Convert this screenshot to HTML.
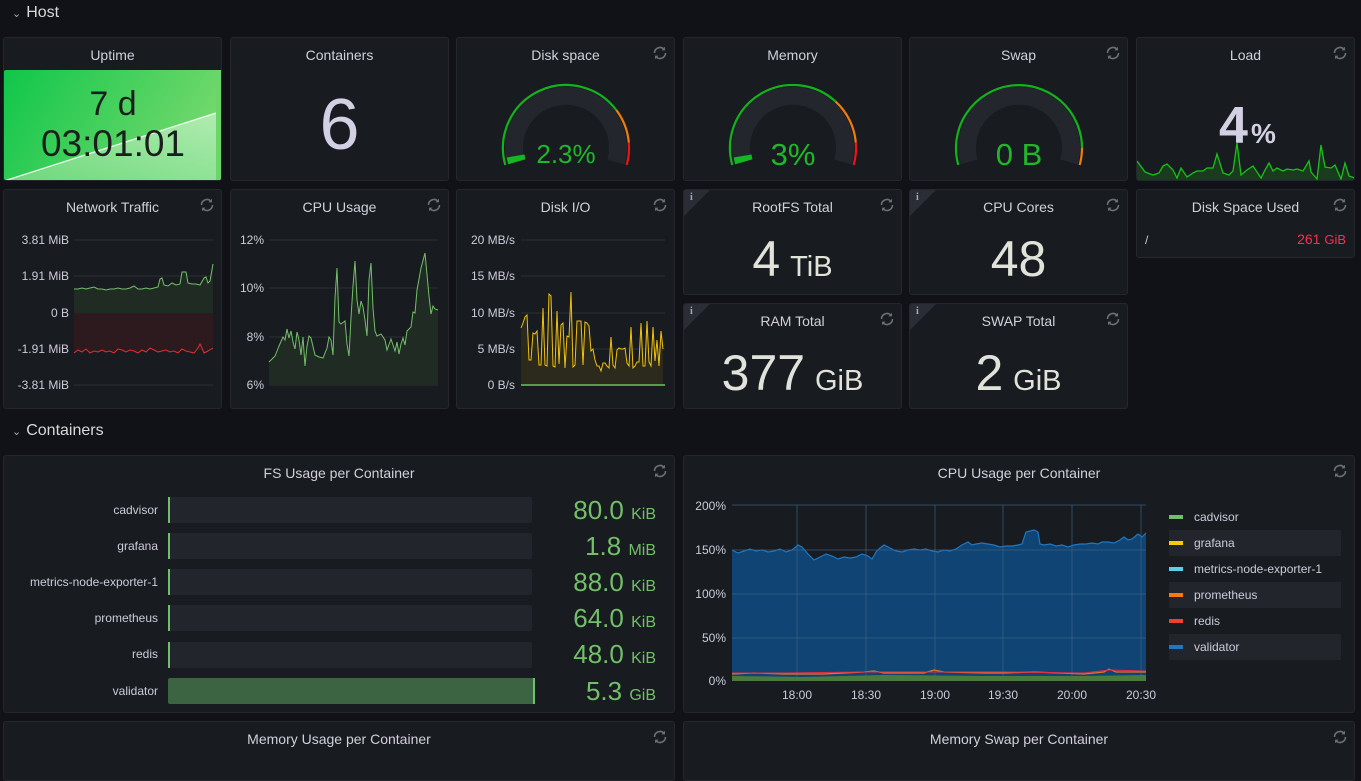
<!DOCTYPE html>
<html><head><meta charset="utf-8"><style>
*{margin:0;padding:0;box-sizing:border-box}
body{width:1361px;height:762px;background:#111217;font-family:"Liberation Sans",sans-serif;color:#ccccdc;overflow:hidden;position:relative}
.p{position:absolute;background:#181b1f;border:1px solid #24272d;border-radius:3px;overflow:hidden}
.t{position:absolute;left:0;right:0;top:9px;text-align:center;font-size:14px;color:#d0d1dc}
.r{position:absolute;right:6px;top:7px;width:16px;height:16px}
.sec{position:absolute;left:12px;font-size:16px;color:#d8d9da}
.sec b{font-weight:normal;font-size:11px;margin-right:5px;color:#aaa}
.info{position:absolute;left:0;top:0;width:0;height:0;border-top:26px solid #2a2d35;border-right:26px solid transparent}
.info i{position:absolute;left:6px;top:-24px;font-size:10px;font-style:normal;font-weight:bold;color:#aaa;font-family:"Liberation Serif",serif}
.big{position:absolute;left:0;right:0;text-align:center;color:#e0e3da;font-size:50px;white-space:nowrap}
.big span{font-size:29px;margin-left:-4px}
svg text{font-family:"Liberation Sans",sans-serif}
</style></head><body>
<svg width="0" height="0" style="position:absolute"><defs><g id="ref"><path d="M2.5 8a5.5 5.5 0 0 1 9.6-3.6" fill="none" stroke="#6c6f78" stroke-width="1.6"/><path d="M13 1.8v3.6H9.4z" fill="#6c6f78"/><path d="M13.5 8a5.5 5.5 0 0 1-9.6 3.6" fill="none" stroke="#6c6f78" stroke-width="1.6"/><path d="M3 14.2v-3.6h3.6z" fill="#6c6f78"/></g></defs></svg>

<div class="sec" style="top:4px"><b>⌄</b>Host</div>

<div class="p" style="left:3px;top:37px;width:219px;height:144px">
<div class="t">Uptime</div>
<svg style="position:absolute;left:0;top:32px" width="219" height="112">
<defs><linearGradient id="ug" x1="0" y1="0" x2="1" y2="0.3"><stop offset="0" stop-color="#0fc64a"/><stop offset="1" stop-color="#72d86c"/></linearGradient>
<linearGradient id="ul" x1="0" y1="1" x2="1" y2="0"><stop offset="0" stop-color="#6cd87a"/><stop offset="1" stop-color="#b0ecb0"/></linearGradient></defs>
<rect x="0" y="0" width="218" height="111" rx="2" fill="url(#ug)"/>
<path d="M0 111 L212 43 L212 111 Z" fill="url(#ul)"/>
<path d="M0 111 L212 43" stroke="#f2fff2" stroke-width="1.2"/>
<rect x="212" y="0" width="6" height="111" fill="#6bd56a"/>
<text x="109" y="45" text-anchor="middle" font-size="34" fill="#1c1e1d">7 d</text>
<text x="109" y="86" text-anchor="middle" font-size="37" fill="#1c1e1d">03:01:01</text>
</svg></div>

<div class="p" style="left:230px;top:37px;width:219px;height:144px">
<div class="t">Containers</div>
<div style="position:absolute;left:0;right:0;top:46px;text-align:center;font-size:72px;color:#d2d0e3">6</div>
</div>

<div class="p" style="left:456px;top:37px;width:219px;height:144px">
<div class="t">Disk space</div><svg class="r"><use href="#ref"/></svg>
<svg style="position:absolute;left:0;top:0" width="219" height="144" fill="none">
<path d="M59 124 A52 52 0 1 1 159 124" stroke="#23262d" stroke-width="18"/>
<path d="M59.9 123.7 A51 51 0 0 1 58.6 118" stroke="#15b824" stroke-width="18"/>
<path d="M48.3 127 A63 63 0 0 1 159.3 72.1" stroke="#13b31c" stroke-width="2.2"/>
<path d="M159.3 72.1 A63 63 0 0 1 171.8 104.5" stroke="#f07c0a" stroke-width="2.2"/>
<path d="M171.8 104.5 A63 63 0 0 1 169.7 127" stroke="#f21313" stroke-width="2.2"/>
<text x="109" y="125" text-anchor="middle" font-size="26" fill="#1fb82a">2.3%</text>
</svg></div>

<div class="p" style="left:683px;top:37px;width:219px;height:144px">
<div class="t">Memory</div>
<svg style="position:absolute;left:0;top:0" width="219" height="144" fill="none">
<path d="M59 124 A52 52 0 1 1 159 124" stroke="#23262d" stroke-width="18"/>
<path d="M59.9 123.7 A51 51 0 0 1 58.6 118" stroke="#15b824" stroke-width="18"/>
<path d="M48.3 127 A63 63 0 0 1 151.6 63.6" stroke="#13b31c" stroke-width="2.2"/>
<path d="M151.6 63.6 A63 63 0 0 1 171.8 104.5" stroke="#f07c0a" stroke-width="2.2"/>
<path d="M171.8 104.5 A63 63 0 0 1 169.7 127" stroke="#f21313" stroke-width="2.2"/>
<text x="109" y="127" text-anchor="middle" font-size="31" fill="#1fb82a">3%</text>
</svg></div>

<div class="p" style="left:909px;top:37px;width:219px;height:144px">
<div class="t">Swap</div><svg class="r"><use href="#ref"/></svg>
<svg style="position:absolute;left:0;top:0" width="219" height="144" fill="none">
<path d="M59 124 A52 52 0 1 1 159 124" stroke="#23262d" stroke-width="18"/>
<path d="M48.3 127 A63 63 0 1 1 172 110" stroke="#13b31c" stroke-width="2.2"/>
<path d="M172 110 A63 63 0 0 1 169.7 127" stroke="#f07c0a" stroke-width="2.2"/>
<text x="109" y="127" text-anchor="middle" font-size="31" fill="#1fb82a">0 B</text>
</svg></div>

<div class="p" style="left:1136px;top:37px;width:219px;height:144px">
<div class="t">Load</div><svg class="r"><use href="#ref"/></svg>
<svg style="position:absolute;left:0;top:0" width="219" height="144">
<polygon fill="#1a3b1d" points="0,123 8,134 16,137 22,135 26,128 30,126 36,132 40,140 44,130 50,139 56,135 60,133 66,133 70,130 76,130 80,116 86,135 92,137 96,133 100,105 104,137 110,132 116,128 124,140 128,132 132,125 136,133 140,130 146,133 150,131 156,132 160,131 166,133 172,123 174,134 180,141 184,107 188,129 194,130 198,127 204,141 208,125 212,138 218,140 218,144 0,144"/>
<polyline fill="none" stroke="#18c21a" stroke-width="1.3" points="0,123 8,134 16,137 22,135 26,128 30,126 36,132 40,140 44,130 50,139 56,135 60,133 66,133 70,130 76,130 80,116 86,135 92,137 96,133 100,105 104,137 110,132 116,128 124,140 128,132 132,125 136,133 140,130 146,133 150,131 156,132 160,131 166,133 172,123 174,134 180,141 184,107 188,129 194,130 198,127 204,141 208,125 212,138 218,140"/>
<text x="82" y="105" font-size="52" font-weight="bold" fill="#d2d0e3">4</text><text x="114" y="105" font-size="28" font-weight="bold" fill="#d2d0e3">%</text>
</svg></div>

<div class="p" style="left:3px;top:189px;width:219px;height:220px">
<div class="t">Network Traffic</div><svg class="r"><use href="#ref"/></svg>
<svg style="position:absolute;left:0;top:0" width="219" height="220" font-size="12" fill="#ccccdc">
<g stroke="#2c2f36"><line x1="70" x2="209" y1="50" y2="50"/><line x1="70" x2="209" y1="86" y2="86"/><line x1="70" x2="209" y1="123" y2="123"/><line x1="70" x2="209" y1="159" y2="159"/><line x1="70" x2="209" y1="195" y2="195"/></g>
<g text-anchor="end"><text x="65" y="54">3.81 MiB</text><text x="65" y="90">1.91 MiB</text><text x="65" y="127">0 B</text><text x="65" y="163">-1.91 MiB</text><text x="65" y="199">-3.81 MiB</text></g>
<polygon fill="#1f2b23" points="70,99 74,99 78,98 82,99 86,98 90,97 94,99 98,99 102,100 106,99 110,99 114,98 118,99 122,99 126,98 130,96 134,99 138,99 142,98 146,99 150,98 154,97 156,89 158,88 160,95 164,96 168,93 172,95 176,94 178,82 182,82 184,93 188,94 192,94 196,95 200,88 202,87 204,93 206,91 209,74 209,123 70,123"/>
<polyline fill="none" stroke="#73bf69" stroke-width="1" points="70,99 74,99 78,98 82,99 86,98 90,97 94,99 98,99 102,100 106,99 110,99 114,98 118,99 122,99 126,98 130,96 134,99 138,99 142,98 146,99 150,98 154,97 156,89 158,88 160,95 164,96 168,93 172,95 176,94 178,82 182,82 184,93 188,94 192,94 196,95 200,88 202,87 204,93 206,91 209,74"/>
<polygon fill="#2c1a1f" points="70,123 209,123 209,158 204,161 200,163 198,158 196,154 194,158 190,163 186,162 182,161 178,159 174,163 170,161 166,162 162,160 158,161 154,162 150,160 146,158 142,162 138,160 134,163 130,161 126,160 122,162 118,160 114,159 110,163 106,161 102,162 98,160 94,162 90,161 86,163 82,159 78,162 74,160 70,163"/>
<polyline fill="none" stroke="#e02f2f" stroke-width="1" points="70,163 74,160 78,162 82,159 86,163 90,161 94,162 98,160 102,162 106,161 110,163 114,159 118,160 122,162 126,160 130,161 134,163 138,160 142,162 146,158 150,160 154,162 158,161 162,160 166,162 170,161 174,163 178,159 182,161 186,162 190,163 194,158 196,154 198,158 200,163 204,161 209,158"/>
</svg></div>

<div class="p" style="left:230px;top:189px;width:219px;height:220px">
<div class="t">CPU Usage</div><svg class="r"><use href="#ref"/></svg>
<svg style="position:absolute;left:0;top:0" width="219" height="220" font-size="12" fill="#ccccdc">
<g stroke="#2c2f36"><line x1="38" x2="207" y1="50" y2="50"/><line x1="38" x2="207" y1="98" y2="98"/><line x1="38" x2="207" y1="147" y2="147"/><line x1="38" x2="207" y1="195" y2="195"/></g>
<g text-anchor="end"><text x="33" y="54">12%</text><text x="33" y="102">10%</text><text x="33" y="151">8%</text><text x="33" y="199">6%</text></g>
<polygon fill="#1f2b23" points="38,172 44,166 48,156 52,147 54,150 56,139 58,148 60,141 62,152 64,159 66,142 68,150 70,165 72,147 74,176 76,156 78,146 80,148 84,165 88,167 92,168 96,158 98,147 100,150 102,165 104,108 106,78 108,132 110,134 114,131 116,154 118,166 120,128 122,96 124,71 126,110 128,124 130,111 132,117 134,130 136,146 138,90 140,73 142,118 144,141 146,146 150,144 154,150 156,160 160,149 164,161 166,152 168,164 170,154 172,148 174,155 176,141 180,137 182,122 184,123 186,100 190,78 194,63 198,106 200,124 202,116 204,119 207,120 207,195 38,195"/>
<polyline fill="none" stroke="#73bf69" stroke-width="1" points="38,172 44,166 48,156 52,147 54,150 56,139 58,148 60,141 62,152 64,159 66,142 68,150 70,165 72,147 74,176 76,156 78,146 80,148 84,165 88,167 92,168 96,158 98,147 100,150 102,165 104,108 106,78 108,132 110,134 114,131 116,154 118,166 120,128 122,96 124,71 126,110 128,124 130,111 132,117 134,130 136,146 138,90 140,73 142,118 144,141 146,146 150,144 154,150 156,160 160,149 164,161 166,152 168,164 170,154 172,148 174,155 176,141 180,137 182,122 184,123 186,100 190,78 194,63 198,106 200,124 202,116 204,119 207,120"/>
</svg></div>

<div class="p" style="left:456px;top:189px;width:219px;height:220px">
<div class="t">Disk I/O</div><svg class="r"><use href="#ref"/></svg>
<svg style="position:absolute;left:0;top:0" width="219" height="220" font-size="12" fill="#ccccdc">
<g stroke="#2c2f36"><line x1="64" x2="208" y1="50" y2="50"/><line x1="64" x2="208" y1="86" y2="86"/><line x1="64" x2="208" y1="123" y2="123"/><line x1="64" x2="208" y1="159" y2="159"/></g>
<g text-anchor="end"><text x="58" y="54">20 MB/s</text><text x="58" y="90">15 MB/s</text><text x="58" y="127">10 MB/s</text><text x="58" y="163">5 MB/s</text><text x="58" y="199">0 B/s</text></g>
<polygon fill="#2b2a1c" points="64,138 66,133 68,127 70,125 72,170 74,170 76,143 78,144 80,141 82,175 84,175 86,118 88,175 90,176 92,104 94,106 96,176 98,177 100,121 102,174 104,135 106,133 108,178 110,146 112,147 114,102 116,177 118,175 120,131 122,131 124,131 126,175 128,132 130,133 132,136 134,161 136,159 138,170 140,176 142,176 144,181 146,173 148,173 150,176 152,178 154,147 156,175 158,178 160,160 162,158 164,159 166,159 168,158 170,173 172,176 174,137 176,178 178,176 180,172 182,172 184,133 186,176 188,176 190,131 192,172 194,176 196,137 198,171 200,150 202,176 204,141 206,159 206,195 64,195"/>
<polyline fill="none" stroke="#f2c10c" stroke-width="1" points="64,138 66,133 68,127 70,125 72,170 74,170 76,143 78,144 80,141 82,175 84,175 86,118 88,175 90,176 92,104 94,106 96,176 98,177 100,121 102,174 104,135 106,133 108,178 110,146 112,147 114,102 116,177 118,175 120,131 122,131 124,131 126,175 128,132 130,133 132,136 134,161 136,159 138,170 140,176 142,176 144,181 146,173 148,173 150,176 152,178 154,147 156,175 158,178 160,160 162,158 164,159 166,159 168,158 170,173 172,176 174,137 176,178 178,176 180,172 182,172 184,133 186,176 188,176 190,131 192,172 194,176 196,137 198,171 200,150 202,176 204,141 206,159"/>
<line x1="64" x2="208" y1="195" y2="195" stroke="#5a9a4f" stroke-width="2"/>
</svg></div>

<div class="p" style="left:683px;top:189px;width:219px;height:106px"><div class="info"><i>i</i></div>
<div class="t">RootFS Total</div><svg class="r"><use href="#ref"/></svg>
<div class="big" style="top:40px">4 <span>TiB</span></div></div>
<div class="p" style="left:909px;top:189px;width:219px;height:106px"><div class="info"><i>i</i></div>
<div class="t">CPU Cores</div><svg class="r"><use href="#ref"/></svg>
<div class="big" style="top:40px">48</div></div>
<div class="p" style="left:683px;top:303px;width:219px;height:106px"><div class="info"><i>i</i></div>
<div class="t">RAM Total</div><svg class="r"><use href="#ref"/></svg>
<div class="big" style="top:40px">377 <span>GiB</span></div></div>
<div class="p" style="left:909px;top:303px;width:219px;height:106px"><div class="info"><i>i</i></div>
<div class="t">SWAP Total</div><svg class="r"><use href="#ref"/></svg>
<div class="big" style="top:40px">2 <span>GiB</span></div></div>

<div class="p" style="left:1136px;top:189px;width:219px;height:69px">
<div class="t">Disk Space Used</div><svg class="r"><use href="#ref"/></svg>
<div style="position:absolute;left:8px;top:43px;font-size:12px;color:#ccccdc">/</div>
<div style="position:absolute;right:8px;top:41px;font-size:14px;color:#f2334f">261 <span style="font-size:13px">GiB</span></div>
</div>

<div class="sec" style="top:422px"><b>⌄</b>Containers</div>

<div class="p" style="left:3px;top:455px;width:672px;height:258px">
<div class="t">FS Usage per Container</div><svg class="r"><use href="#ref"/></svg>
<svg style="position:absolute;left:0;top:0" width="672" height="258" font-size="12" fill="#ccccdc">
<g fill="#22252b"><rect x="164" y="41" width="364" height="26" rx="2"/><rect x="164" y="77" width="364" height="26" rx="2"/><rect x="164" y="113" width="364" height="26" rx="2"/><rect x="164" y="149" width="364" height="26" rx="2"/><rect x="164" y="186" width="364" height="26" rx="2"/></g>
<rect x="164" y="222" width="367" height="26" rx="2" fill="#3c6443"/><rect x="529" y="222" width="2" height="26" fill="#73bf69"/>
<g fill="#73bf69"><rect x="164" y="41" width="2" height="26"/><rect x="164" y="77" width="2" height="26"/><rect x="164" y="113" width="2" height="26"/><rect x="164" y="149" width="2" height="26"/><rect x="164" y="186" width="2" height="26"/></g>
<g text-anchor="end"><text x="154" y="58">cadvisor</text><text x="154" y="94">grafana</text><text x="154" y="130">metrics-node-exporter-1</text><text x="154" y="166">prometheus</text><text x="154" y="202">redis</text><text x="154" y="239">validator</text></g>
<g text-anchor="end" fill="#73bf69" font-size="26"><text x="652" y="63">80.0 <tspan font-size="16">KiB</tspan></text><text x="652" y="99">1.8 <tspan font-size="16">MiB</tspan></text><text x="652" y="135">88.0 <tspan font-size="16">KiB</tspan></text><text x="652" y="171">64.0 <tspan font-size="16">KiB</tspan></text><text x="652" y="207">48.0 <tspan font-size="16">KiB</tspan></text><text x="652" y="244">5.3 <tspan font-size="16">GiB</tspan></text></g>
</svg></div>

<div class="p" style="left:683px;top:455px;width:672px;height:258px">
<div class="t">CPU Usage per Container</div><svg class="r"><use href="#ref"/></svg>
<svg style="position:absolute;left:0;top:0" width="672" height="258" font-size="12" fill="#ccccdc">
<polygon fill="#0f4474" points="48,94 54,97 60,95 66,93 72,95 78,94 84,96 90,95 96,93 102,96 108,94 114,89 118,91 124,98 130,104 136,101 142,98 148,100 154,103 160,101 166,102 172,101 178,98 184,100 188,103 192,96 196,92 200,89 206,92 212,95 218,96 224,94 230,93 236,94 242,93 248,95 254,96 260,94 266,95 272,93 278,89 284,86 288,89 292,88 298,87 304,88 310,89 316,91 322,90 328,90 334,89 338,88 342,76 350,74 354,76 356,88 360,89 366,88 372,90 378,89 384,91 390,89 396,88 402,88 408,87 414,88 418,86 424,86 430,87 436,84 440,81 444,84 448,83 454,78 458,81 462,77 462,225 48,225"/>
<polyline fill="none" stroke="#1f78c1" stroke-width="1.2" points="48,94 54,97 60,95 66,93 72,95 78,94 84,96 90,95 96,93 102,96 108,94 114,89 118,91 124,98 130,104 136,101 142,98 148,100 154,103 160,101 166,102 172,101 178,98 184,100 188,103 192,96 196,92 200,89 206,92 212,95 218,96 224,94 230,93 236,94 242,93 248,95 254,96 260,94 266,95 272,93 278,89 284,86 288,89 292,88 298,87 304,88 310,89 316,91 322,90 328,90 334,89 338,88 342,76 350,74 354,76 356,88 360,89 366,88 372,90 378,89 384,91 390,89 396,88 402,88 408,87 414,88 418,86 424,86 430,87 436,84 440,81 444,84 448,83 454,78 458,81 462,77"/>
<g stroke="#3a5f85" stroke-opacity="0.7"><line x1="48" x2="462" y1="49" y2="49"/><line x1="48" x2="462" y1="94" y2="94"/><line x1="48" x2="462" y1="138" y2="138"/><line x1="48" x2="462" y1="182" y2="182"/><line x1="113" x2="113" y1="49" y2="225"/><line x1="182" x2="182" y1="49" y2="225"/><line x1="251" x2="251" y1="49" y2="225"/><line x1="319" x2="319" y1="49" y2="225"/><line x1="388" x2="388" y1="49" y2="225"/><line x1="457" x2="457" y1="49" y2="225"/></g>
<polygon fill="#4a7b3e" points="48,220 120,221 200,219 300,220 400,220 462,219 462,225 48,225"/>
<polyline fill="none" stroke="#e0752d" stroke-width="1.2" points="48,218 70,217 100,218 140,218 180,216 190,215 200,217 240,217 250,214 260,216 300,217 320,217 350,216 400,218 420,216 425,213 432,216 462,216"/>
<polyline fill="none" stroke="#e02f44" stroke-width="1" points="48,217 100,217 180,216 250,216 320,216 400,217 425,214 462,215"/>
<g text-anchor="end"><text x="42" y="54">200%</text><text x="42" y="98">150%</text><text x="42" y="142">100%</text><text x="42" y="186">50%</text><text x="42" y="229">0%</text></g>
<g text-anchor="middle"><text x="113" y="243">18:00</text><text x="182" y="243">18:30</text><text x="251" y="243">19:00</text><text x="319" y="243">19:30</text><text x="388" y="243">20:00</text><text x="457" y="243">20:30</text></g>
<g fill="#22252b"><rect x="485" y="74" width="172" height="26"/><rect x="485" y="126" width="172" height="26"/><rect x="485" y="178" width="172" height="26"/></g>
<rect x="485" y="59" width="14" height="4" fill="#73bf69"/><rect x="485" y="85" width="14" height="4" fill="#f2cc0c"/><rect x="485" y="111" width="14" height="4" fill="#5ad0e8"/><rect x="485" y="137" width="14" height="4" fill="#ff780a"/><rect x="485" y="163" width="14" height="4" fill="#f2402f"/><rect x="485" y="189" width="14" height="4" fill="#1f78c1"/>
<text x="510" y="65">cadvisor</text><text x="510" y="91">grafana</text><text x="510" y="117">metrics-node-exporter-1</text><text x="510" y="143">prometheus</text><text x="510" y="169">redis</text><text x="510" y="195">validator</text>
</svg></div>

<div class="p" style="left:3px;top:721px;width:672px;height:60px">
<div class="t">Memory Usage per Container</div><svg class="r"><use href="#ref"/></svg></div>
<div class="p" style="left:683px;top:721px;width:672px;height:60px">
<div class="t">Memory Swap per Container</div><svg class="r"><use href="#ref"/></svg></div>
</body></html>
